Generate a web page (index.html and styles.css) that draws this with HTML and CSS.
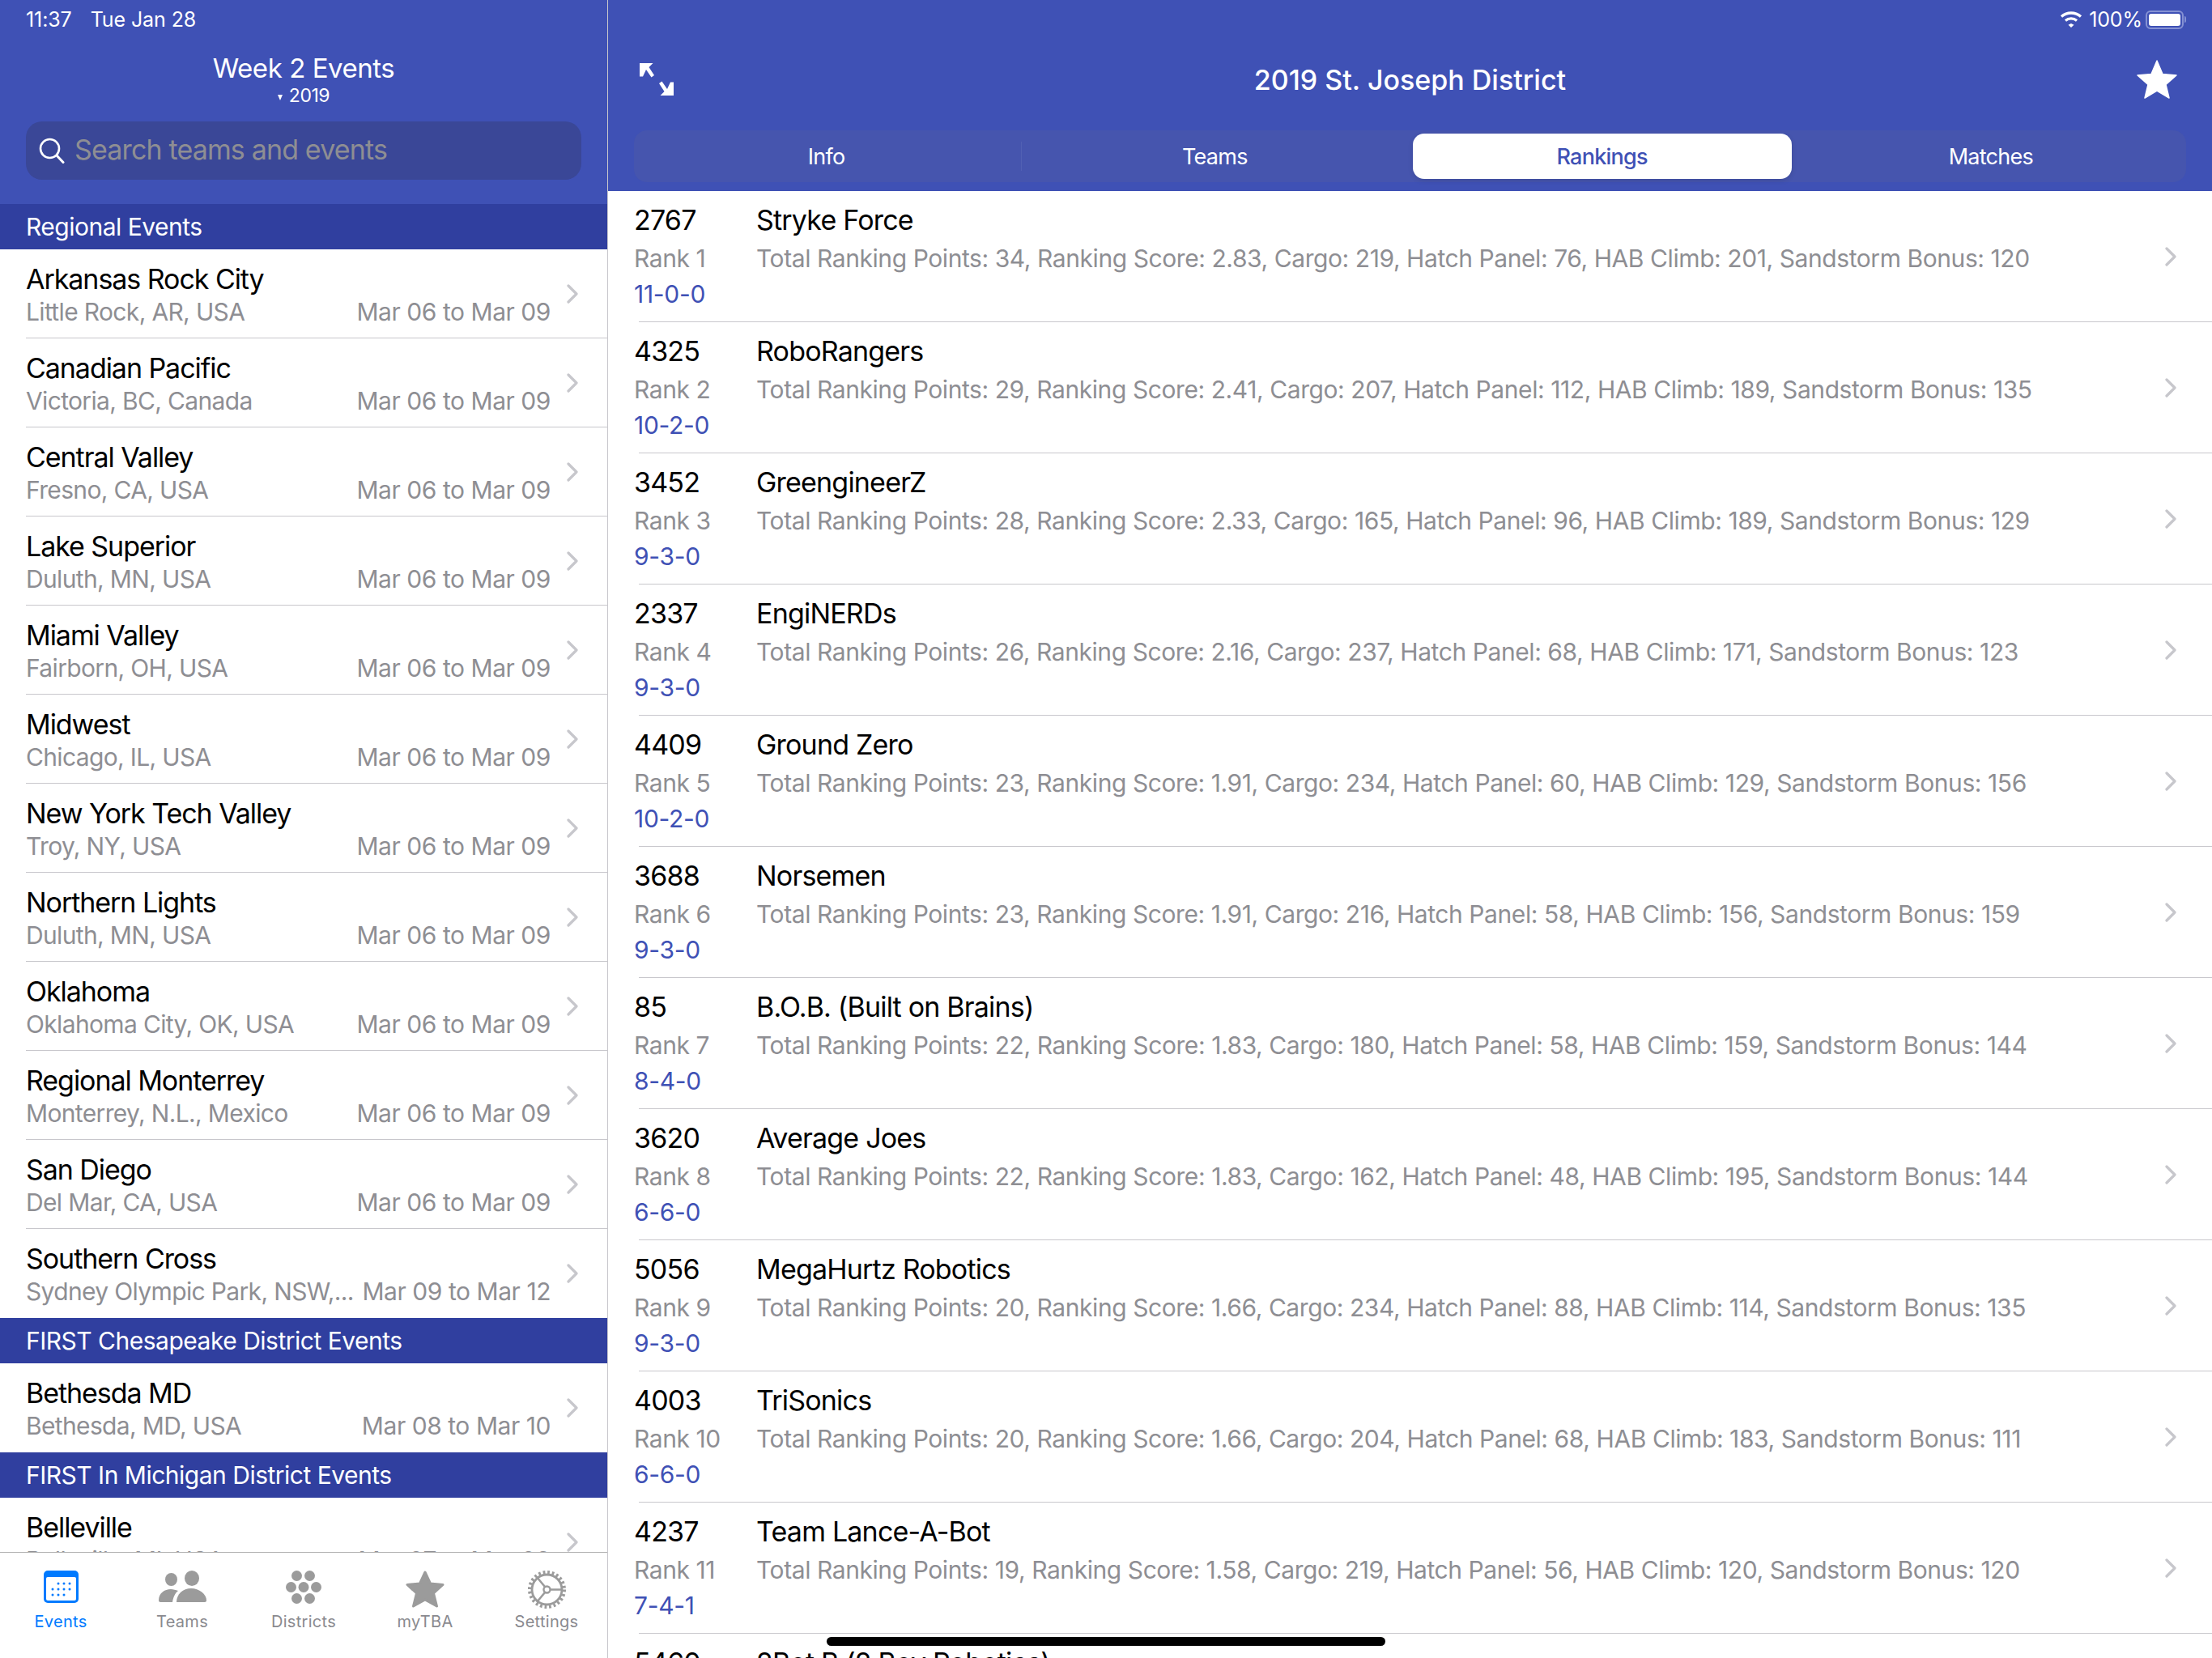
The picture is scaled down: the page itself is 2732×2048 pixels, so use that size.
FILE: index.html
```html
<!DOCTYPE html>
<html lang="en">

<head>
    <meta charset="UTF-8">
    <title>The Blue Alliance</title>
    <link rel="stylesheet" href="styles.css">
</head>

<body>
    <div class="app">
        <div class="side">
            <div class="side-head">
                <div class="status">
                    <span>11:37</span>
                    <span>Tue Jan 28</span>
                </div>
                <div class="side-title">Week 2 Events</div>
                <div class="side-year"><span class="caret"></span>2019</div>
                <div class="search">
                    <svg class="search-icon" viewBox="0 0 32 32" width="32" height="32">
                        <circle cx="13.5" cy="13.5" r="11.5" fill="none" stroke="#fff" stroke-width="2.6" />
                        <path d="M22 22l8 8.5" fill="none" stroke="#fff" stroke-width="3" stroke-linecap="round" />
                    </svg>
                    <span class="placeholder">Search teams and events</span>
                </div>
            </div>
            <div class="events">
                <div class="section">Regional Events</div>
                <div class="event"><div class="event-text"><div class="event-name">Arkansas Rock City</div><div class="event-sub"><span>Little Rock, AR, USA</span><span>Mar 06 to Mar 09</span></div></div><i class="chev"></i></div>
                <div class="event"><div class="event-text"><div class="event-name">Canadian Pacific</div><div class="event-sub"><span>Victoria, BC, Canada</span><span>Mar 06 to Mar 09</span></div></div><i class="chev"></i></div>
                <div class="event"><div class="event-text"><div class="event-name">Central Valley</div><div class="event-sub"><span>Fresno, CA, USA</span><span>Mar 06 to Mar 09</span></div></div><i class="chev"></i></div>
                <div class="event"><div class="event-text"><div class="event-name">Lake Superior</div><div class="event-sub"><span>Duluth, MN, USA</span><span>Mar 06 to Mar 09</span></div></div><i class="chev"></i></div>
                <div class="event"><div class="event-text"><div class="event-name">Miami Valley</div><div class="event-sub"><span>Fairborn, OH, USA</span><span>Mar 06 to Mar 09</span></div></div><i class="chev"></i></div>
                <div class="event"><div class="event-text"><div class="event-name">Midwest</div><div class="event-sub"><span>Chicago, IL, USA</span><span>Mar 06 to Mar 09</span></div></div><i class="chev"></i></div>
                <div class="event"><div class="event-text"><div class="event-name">New York Tech Valley</div><div class="event-sub"><span>Troy, NY, USA</span><span>Mar 06 to Mar 09</span></div></div><i class="chev"></i></div>
                <div class="event"><div class="event-text"><div class="event-name">Northern Lights</div><div class="event-sub"><span>Duluth, MN, USA</span><span>Mar 06 to Mar 09</span></div></div><i class="chev"></i></div>
                <div class="event"><div class="event-text"><div class="event-name">Oklahoma</div><div class="event-sub"><span>Oklahoma City, OK, USA</span><span>Mar 06 to Mar 09</span></div></div><i class="chev"></i></div>
                <div class="event"><div class="event-text"><div class="event-name">Regional Monterrey</div><div class="event-sub"><span>Monterrey, N.L., Mexico</span><span>Mar 06 to Mar 09</span></div></div><i class="chev"></i></div>
                <div class="event"><div class="event-text"><div class="event-name">San Diego</div><div class="event-sub"><span>Del Mar, CA, USA</span><span>Mar 06 to Mar 09</span></div></div><i class="chev"></i></div>
                <div class="event last"><div class="event-text"><div class="event-name">Southern Cross</div><div class="event-sub"><span>Sydney Olympic Park, NSW,...</span><span>Mar 09 to Mar 12</span></div></div><i class="chev"></i></div>
                <div class="section">FIRST Chesapeake District Events</div>
                <div class="event last"><div class="event-text"><div class="event-name">Bethesda MD</div><div class="event-sub"><span>Bethesda, MD, USA</span><span>Mar 08 to Mar 10</span></div></div><i class="chev"></i></div>
                <div class="section">FIRST In Michigan District Events</div>
                <div class="event"><div class="event-text"><div class="event-name">Belleville</div><div class="event-sub"><span>Belleville, MI, USA</span><span>Mar 07 to Mar 09</span></div></div><i class="chev"></i></div>
            </div>
            <div class="tabbar">
                <div class="tab active">
                    <div class="tab-icon">
                        <svg viewBox="0 0 43 40" width="43" height="40">
                            <rect width="43" height="40" rx="5" fill="#007aff" />
                            <rect x="3" y="8" width="37" height="29" rx="2" fill="#fff" />
                            <g fill="#007aff">
                                <circle cx="18" cy="16" r="1.500" /><circle cx="25" cy="16" r="1.500" /><circle cx="32" cy="16" r="1.500" />
                                <circle cx="11" cy="23" r="1.500" /><circle cx="18" cy="23" r="1.500" /><circle cx="25" cy="23" r="1.500" /><circle cx="32" cy="23" r="1.500" />
                                <circle cx="11" cy="30" r="1.500" /><circle cx="18" cy="30" r="1.500" /><circle cx="25" cy="30" r="1.500" />
                            </g>
                        </svg>
                    </div>
                    <span>Events</span>
                </div>
                <div class="tab">
                    <div class="tab-icon">
                        <svg viewBox="0 0 59 40" width="59" height="40" fill="#9b9b9b">
                            <ellipse cx="15.500" cy="11" rx="7.500" ry="8" />
                            <ellipse cx="41" cy="9.500" rx="9" ry="9.500" />
                            <path d="M0 37c0-9 7-14 15-14 3 0 6 1 9 2-4 3-6 8-7 14H2c-1 0-2-1-2-2z" />
                            <path d="M22 39c0-10 8-17 18-17s19 7 19 15c0 1-1 2-2 2z" />
                        </svg>
                    </div>
                    <span>Teams</span>
                </div>
                <div class="tab">
                    <div class="tab-icon">
                        <svg viewBox="0 0 44 41" width="44" height="41" fill="#9b9b9b">
                            <circle cx="13.500" cy="6.500" r="6.500" />
                            <circle cx="29.500" cy="6.500" r="6.500" />
                            <circle cx="6.500" cy="20.500" r="6.500" />
                            <circle cx="22" cy="20.500" r="6.500" />
                            <circle cx="37.500" cy="20.500" r="6.500" />
                            <circle cx="13.500" cy="34.500" r="6.500" />
                            <circle cx="29.500" cy="34.500" r="6.500" />
                        </svg>
                    </div>
                    <span>Districts</span>
                </div>
                <div class="tab">
                    <div class="tab-icon">
                        <svg viewBox="0 0 48 46" width="48" height="46" fill="#9b9b9b">
                            <path d="M24 2l6.500 14 15.500 1.500-11.500 10.500 4 16L24 36 9.500 44l4-16L2 17.500 17.500 16z" stroke="#9b9b9b" stroke-width="3" stroke-linejoin="round" />
                        </svg>
                    </div>
                    <span>myTBA</span>
                </div>
                <div class="tab">
                    <div class="tab-icon">
                        <svg viewBox="0 0 47 47" width="47" height="47" fill="none" stroke="#9b9b9b">
                            <circle cx="23.500" cy="23.500" r="18.500" stroke-width="2.800" />
                            <circle cx="23.500" cy="23.500" r="21.500" stroke-width="4" stroke-dasharray="2.800 2.830" />
                            <circle cx="23.500" cy="23.500" r="4" stroke-width="2.400" />
                            <path d="M27.500 23.500H42M21 20L11 8M21 27L11 39" stroke-width="2.600" />
                        </svg>
                    </div>
                    <span>Settings</span>
                </div>
            </div>
        </div>

        <div class="main">
            <div class="main-head">
                <div class="status status-right">
                    <svg viewBox="0 0 28 20" width="28" height="20" fill="none" stroke="#fff">
                        <path d="M2 6.500C9 .5 19 .5 26 6.500" stroke-width="3.400" />
                        <path d="M7 11.500c4-3.400 10-3.400 14 0" stroke-width="3.200" />
                        <path d="M14 15l3.500 1.800L14 20l-3.500-3.200z" fill="#fff" stroke="none" />
                    </svg>
                    <span>100%</span>
                    <div class="battery"><div class="battery-fill"></div></div>
                    <div class="battery-tip"></div>
                </div>
                <div class="nav">
                    <svg viewBox="0 0 42 40" width="42" height="40" fill="#fff">
                        <path d="M0 0H16.500L11.500 5 18 15 14.500 17.500 8 8 4 16.500H0z" />
                        <path d="M0 0H16.500L11.500 5 18 15 14.500 17.500 8 8 4 16.500H0z" transform="rotate(180 21 20)" />
                    </svg>
                    <div class="nav-title">2019 St. Joseph District</div>
                    <svg viewBox="0 0 50 48" width="50" height="48" fill="#fff">
                        <path d="M25 1l7 16.500 17 1.500-13 11.400 4 16.600-15-8.900-15 8.900 4-16.600L1 19l17-1.500z" stroke="#fff" stroke-width="1.500" stroke-linejoin="round" />
                    </svg>
                </div>
                <div class="tabs">
                    <div class="seg sep">Info</div>
                    <div class="seg">Teams</div>
                    <div class="seg selected">Rankings</div>
                    <div class="seg">Matches</div>
                </div>
            </div>
            <div class="rows">
                <div class="row"><div class="row-num"><div class="t1">2767</div><div class="t2">Rank 1</div><div class="t3">11-0-0</div></div><div class="row-body"><div class="t1">Stryke Force</div><div class="t2">Total Ranking Points: 34, Ranking Score: 2.83, Cargo: 219, Hatch Panel: 76, HAB Climb: 201, Sandstorm Bonus: 120</div></div><i class="chev"></i></div>
                <div class="row"><div class="row-num"><div class="t1">4325</div><div class="t2">Rank 2</div><div class="t3">10-2-0</div></div><div class="row-body"><div class="t1">RoboRangers</div><div class="t2">Total Ranking Points: 29, Ranking Score: 2.41, Cargo: 207, Hatch Panel: 112, HAB Climb: 189, Sandstorm Bonus: 135</div></div><i class="chev"></i></div>
                <div class="row"><div class="row-num"><div class="t1">3452</div><div class="t2">Rank 3</div><div class="t3">9-3-0</div></div><div class="row-body"><div class="t1">GreengineerZ</div><div class="t2">Total Ranking Points: 28, Ranking Score: 2.33, Cargo: 165, Hatch Panel: 96, HAB Climb: 189, Sandstorm Bonus: 129</div></div><i class="chev"></i></div>
                <div class="row"><div class="row-num"><div class="t1">2337</div><div class="t2">Rank 4</div><div class="t3">9-3-0</div></div><div class="row-body"><div class="t1">EngiNERDs</div><div class="t2">Total Ranking Points: 26, Ranking Score: 2.16, Cargo: 237, Hatch Panel: 68, HAB Climb: 171, Sandstorm Bonus: 123</div></div><i class="chev"></i></div>
                <div class="row"><div class="row-num"><div class="t1">4409</div><div class="t2">Rank 5</div><div class="t3">10-2-0</div></div><div class="row-body"><div class="t1">Ground Zero</div><div class="t2">Total Ranking Points: 23, Ranking Score: 1.91, Cargo: 234, Hatch Panel: 60, HAB Climb: 129, Sandstorm Bonus: 156</div></div><i class="chev"></i></div>
                <div class="row"><div class="row-num"><div class="t1">3688</div><div class="t2">Rank 6</div><div class="t3">9-3-0</div></div><div class="row-body"><div class="t1">Norsemen</div><div class="t2">Total Ranking Points: 23, Ranking Score: 1.91, Cargo: 216, Hatch Panel: 58, HAB Climb: 156, Sandstorm Bonus: 159</div></div><i class="chev"></i></div>
                <div class="row"><div class="row-num"><div class="t1">85</div><div class="t2">Rank 7</div><div class="t3">8-4-0</div></div><div class="row-body"><div class="t1">B.O.B. (Built on Brains)</div><div class="t2">Total Ranking Points: 22, Ranking Score: 1.83, Cargo: 180, Hatch Panel: 58, HAB Climb: 159, Sandstorm Bonus: 144</div></div><i class="chev"></i></div>
                <div class="row"><div class="row-num"><div class="t1">3620</div><div class="t2">Rank 8</div><div class="t3">6-6-0</div></div><div class="row-body"><div class="t1">Average Joes</div><div class="t2">Total Ranking Points: 22, Ranking Score: 1.83, Cargo: 162, Hatch Panel: 48, HAB Climb: 195, Sandstorm Bonus: 144</div></div><i class="chev"></i></div>
                <div class="row"><div class="row-num"><div class="t1">5056</div><div class="t2">Rank 9</div><div class="t3">9-3-0</div></div><div class="row-body"><div class="t1">MegaHurtz Robotics</div><div class="t2">Total Ranking Points: 20, Ranking Score: 1.66, Cargo: 234, Hatch Panel: 88, HAB Climb: 114, Sandstorm Bonus: 135</div></div><i class="chev"></i></div>
                <div class="row"><div class="row-num"><div class="t1">4003</div><div class="t2">Rank 10</div><div class="t3">6-6-0</div></div><div class="row-body"><div class="t1">TriSonics</div><div class="t2">Total Ranking Points: 20, Ranking Score: 1.66, Cargo: 204, Hatch Panel: 68, HAB Climb: 183, Sandstorm Bonus: 111</div></div><i class="chev"></i></div>
                <div class="row"><div class="row-num"><div class="t1">4237</div><div class="t2">Rank 11</div><div class="t3">7-4-1</div></div><div class="row-body"><div class="t1">Team Lance-A-Bot</div><div class="t2">Total Ranking Points: 19, Ranking Score: 1.58, Cargo: 219, Hatch Panel: 56, HAB Climb: 120, Sandstorm Bonus: 120</div></div><i class="chev"></i></div>
                <div class="row"><div class="row-num"><div class="t1">5460</div></div><div class="row-body"><div class="t1">2Bot B (2 Boy Robotics)</div></div></div>
            </div>
        </div>
        <div class="home-bar"></div>
    </div>
</body>

</html>
```
FILE: styles.css
```css
* {
    margin: 0;
    padding: 0;
    box-sizing: border-box;
}

body {
    width: 2732px;
    height: 2048px;
    overflow: hidden;
    background: #fff;
    font-family: "Inter", "Liberation Sans", sans-serif;
    letter-spacing: -0.45px;
    color: #000;
}

.app {
    display: flex;
    width: 2732px;
    height: 2048px;
    position: relative;
}

/* left column */
.side {
    width: 751px;
    height: 2048px;
    display: flex;
    flex-direction: column;
    border-right: 1px solid #c8c7cc;
}

.side-head {
    height: 252px;
    background: #3f51b5;
    color: #fff;
    padding: 10px 32px 0;
}

.status {
    display: flex;
    gap: 23px;
    height: 28px;
    line-height: 28px;
    font-size: 25px;
    letter-spacing: -0.1px;
}

.side-title {
    margin-top: 26px;
    text-align: center;
    font-size: 33px;
    line-height: 40px;
}

.side-year {
    text-align: center;
    font-size: 23px;
    line-height: 28px;
}

.caret {
    display: inline-block;
    width: 0;
    height: 0;
    margin: 0 8px 2px 0;
    border-left: 3px solid transparent;
    border-right: 3px solid transparent;
    border-top: 7px solid #fff;
}

.search {
    margin-top: 18px;
    height: 72px;
    background: #3a4797;
    border-radius: 20px;
    display: flex;
    align-items: center;
    gap: 12px;
    padding-left: 16px;
    font-size: 34px;
    letter-spacing: -0.85px;
    color: #8e8e93;
}

.placeholder {
    margin-bottom: 3px;
}

.events {
    flex: 1;
    overflow: hidden;
}

.section {
    height: 56px;
    line-height: 56px;
    padding-left: 32px;
    background: #303f9f;
    color: #fff;
    font-size: 30px;
    letter-spacing: -0.5px;
}

.event {
    height: 110px;
    margin-left: 32px;
    padding-right: 36px;
    border-bottom: 1px solid #c8c7cc;
    display: flex;
    align-items: center;
    gap: 20px;
}

.event.last {
    border-bottom: 0;
}

.event-text {
    flex: 1;
    min-width: 0;
    height: 110px;
    padding-top: 16px;
}

.event-name {
    font-size: 34px;
    line-height: 42px;
    letter-spacing: -1.05px;
}

.event-sub {
    display: flex;
    justify-content: space-between;
    font-size: 30px;
    line-height: 38px;
    letter-spacing: -0.65px;
    color: #8e8e93;
}

.event-sub span:last-child {
    letter-spacing: -0.45px;
}

.chev {
    display: block;
    flex: none;
    width: 14px;
    height: 24px;
    background: no-repeat center/14px 24px url("data:image/svg+xml,%3Csvg xmlns='http://www.w3.org/2000/svg' viewBox='0 0 14 24'%3E%3Cpath d='M2 2l10 10L2 22' fill='none' stroke='%23c7c7cc' stroke-width='3.2' stroke-linecap='round' stroke-linejoin='round'/%3E%3C/svg%3E");
}

.tabbar {
    height: 131px;
    flex: none;
    border-top: 1px solid #b2b2b2;
    background: #fff;
    display: flex;
}

.tab {
    width: 150px;
    display: flex;
    flex-direction: column;
    align-items: center;
    color: #8a8a8f;
    font-size: 20px;
    letter-spacing: 0.3px;
}

.tab-icon {
    height: 48px;
    margin-top: 22px;
}

.tab svg {
    display: block;
}

.tab span {
    margin-top: 3px;
    line-height: 24px;
}

.tab.active {
    color: #007aff;
}

/* right column */
.main {
    flex: 1;
    height: 2048px;
    overflow: hidden;
}

.main-head {
    height: 236px;
    background: #3f51b5;
    color: #fff;
    padding: 10px 32px 0;
}

.status-right {
    justify-content: flex-end;
    align-items: center;
    gap: 8px;
    padding-right: 0;
}

.battery {
    width: 47px;
    height: 23px;
    margin-left: -4px;
    border: 2px solid #8591d3;
    border-radius: 6px;
    padding: 2px;
}

.battery-fill {
    height: 15px;
    background: #fff;
    border-radius: 3px;
}

.battery-tip {
    width: 2px;
    height: 8px;
    margin-left: -7px;
    background: #8591d3;
    border-radius: 0 2px 2px 0;
}

.nav {
    display: flex;
    align-items: center;
    justify-content: space-between;
    height: 50px;
    margin-top: 35px;
    padding: 0 11px 0 7px;
}

.nav-title {
    flex: 1;
    padding-left: 12px;
    text-align: center;
    font-size: 34px;
    font-weight: 500;
    letter-spacing: 0;
}

.tabs {
    display: grid;
    grid-template-columns: repeat(4, 1fr);
    height: 64px;
    margin: 38px 0 0;
    background: #4655ae;
    border-radius: 16px;
}

.seg {
    display: flex;
    align-items: center;
    justify-content: center;
    padding-right: 3px;
    font-size: 27px;
    letter-spacing: -0.75px;
}

.seg.sep {
    border-right: 1px solid #5260b3;
    margin: 14px 0;
}

.seg.selected {
    margin: 4px 8px 4px 3px;
    padding-right: 0;
    background: #fff;
    border-radius: 14px;
    color: #3f51b5;
    font-weight: 500;
    box-shadow: 0 2px 6px rgba(0, 0, 0, .12);
}

.row {
    display: flex;
    height: 162px;
    margin-left: 38px;
    padding-right: 44px;
    border-bottom: 1px solid #c8c7cc;
    align-items: center;
}

.row-num {
    width: 151px;
    margin-left: -6px;
    height: 161px;
    padding-top: 14px;
    flex: none;
}

.row-body {
    flex: 1;
    height: 161px;
    padding-top: 14px;
}

.t1 {
    font-size: 34px;
    line-height: 44px;
    letter-spacing: -0.8px;
}

.t2 {
    font-size: 30px;
    line-height: 50px;
    letter-spacing: -0.42px;
    color: #8e8e93;
}

.t3 {
    font-size: 30px;
    line-height: 38px;
    letter-spacing: -0.3px;
    color: #3f51b5;
}

.home-bar {
    position: absolute;
    left: 1021px;
    top: 2022px;
    width: 690px;
    height: 11px;
    border-radius: 6px;
    background: #000;
}
```
